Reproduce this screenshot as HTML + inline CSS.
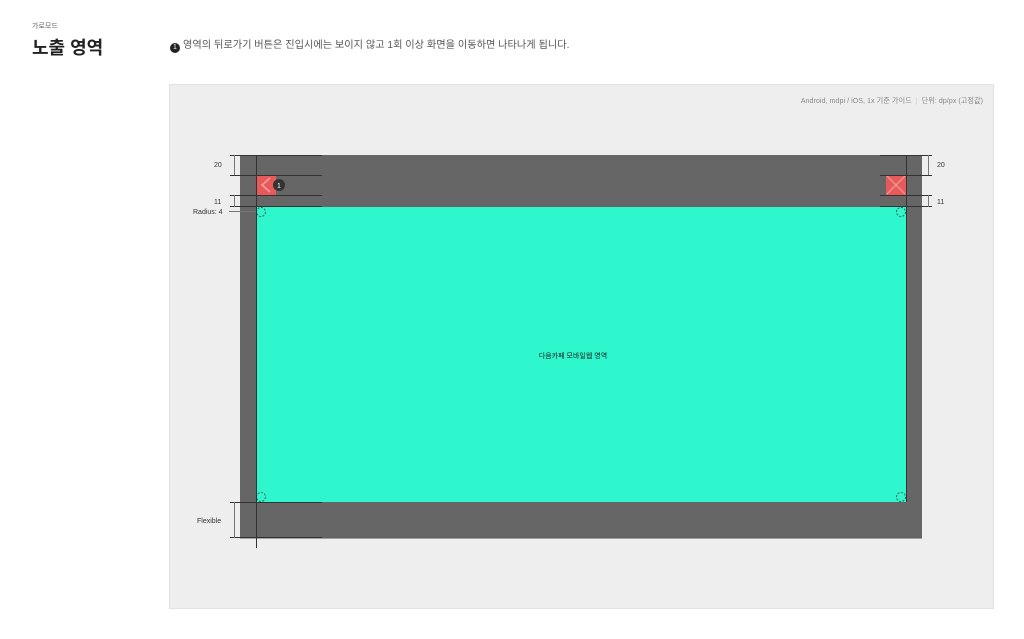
<!DOCTYPE html>
<html><head><meta charset="utf-8"><style>
html,body{margin:0;padding:0;background:#fff;width:1024px;height:639px;overflow:hidden;position:relative;font-family:"Liberation Sans","Noto Sans CJK KR",sans-serif;}
.a{position:absolute}
</style></head><body>
<div class="a" style="left:32px;top:21px;font-size:7px;color:#666">가로모드</div>
<div class="a" style="left:32px;top:34px;font-size:18px;font-weight:bold;color:#222;letter-spacing:0">노출 영역</div>
<div class="a" style="left:170px;top:36px;font-size:10.2px;color:#555;white-space:nowrap"><span style="display:inline-block;width:10px;height:10px;border-radius:50%;background:#222;color:#fff;font-size:7px;text-align:center;line-height:10px;vertical-align:-1px;margin-right:3px">1</span>영역의 뒤로가기 버튼은 진입시에는 보이지 않고 1회 이상 화면을 이동하면 나타나게 됩니다.</div>
<div class="a" style="left:169px;top:84px;width:823px;height:523px;background:#eeeeee;border:1px solid #e2e2e2"></div>
<div class="a" style="left:700px;top:96px;width:283px;text-align:right;font-size:7.2px;color:#888;white-space:nowrap">Android, mdpi / iOS, 1x 기준 가이드 &nbsp;<span style="color:#ccc">|</span>&nbsp; 단위: dp/px (고정값)</div>
<svg class="a" style="left:0;top:0" width="1024" height="639">
<rect x="240" y="155" width="682" height="383" fill="#666" />
<rect x="240" y="537" width="682" height="2" fill="#555" opacity=".5"/>
<rect x="256" y="207" width="650" height="295" fill="#2ef7cd"/>
<rect x="257" y="175" width="19" height="20" fill="#e85a5a"/>
<polyline points="270,178 262,185 270,192" fill="none" stroke="#f5a0a0" stroke-width="1.5"/>
<circle cx="279" cy="185" r="6" fill="#333"/>
<text x="279" y="188" font-size="7" fill="#fff" text-anchor="middle" font-family="Liberation Sans">1</text>
<rect x="886" y="175" width="20" height="20" fill="#e85a5a"/>
<path d="M887 176L905 194M905 176L887 194" stroke="#f5a0a0" stroke-width="1.2"/>
<g stroke="#333" stroke-width="1">
<line x1="230" y1="155.5" x2="322" y2="155.5"/>
<line x1="230" y1="175.5" x2="322" y2="175.5"/>
<line x1="230" y1="195.5" x2="322" y2="195.5"/>
<line x1="230" y1="206.5" x2="322" y2="206.5"/>
<line x1="230" y1="502.5" x2="322" y2="502.5"/>
<line x1="230" y1="537.5" x2="322" y2="537.5"/>
<line x1="256.5" y1="155" x2="256.5" y2="548"/>
<line x1="880" y1="155.5" x2="932" y2="155.5"/>
<line x1="880" y1="175.5" x2="932" y2="175.5"/>
<line x1="880" y1="195.5" x2="932" y2="195.5"/>
<line x1="880" y1="206.5" x2="932" y2="206.5"/>
<line x1="906.5" y1="155" x2="906.5" y2="502"/>
</g>
<g stroke="#777" stroke-width="1">
<line x1="234.5" y1="155" x2="234.5" y2="175"/>
<line x1="234.5" y1="195" x2="234.5" y2="207"/>
<line x1="234.5" y1="502" x2="234.5" y2="538"/>
<line x1="928.5" y1="155" x2="928.5" y2="175"/>
<line x1="928.5" y1="195" x2="928.5" y2="207"/>
<line x1="229" y1="211.5" x2="256" y2="211.5"/>
</g>
<g fill="none" stroke="#333" stroke-width="0.8" stroke-dasharray="2,1.5">
<circle cx="261" cy="212" r="4.5"/>
<circle cx="901" cy="212" r="4.5"/>
<circle cx="261" cy="497" r="4.5"/>
<circle cx="901" cy="497" r="4.5"/>
</g>
<g font-family="Liberation Sans" font-size="7" fill="#333">
<text x="214" y="167">20</text>
<text x="214" y="204">11</text>
<text x="193" y="214">Radius: 4</text>
<text x="197" y="523">Flexible</text>
<text x="937" y="167">20</text>
<text x="937" y="204">11</text>
</g>
<text x="573" y="358" font-size="7" fill="#222" text-anchor="middle" font-family="Liberation Sans, Noto Sans CJK KR, sans-serif">다음카페 모바일웹 영역</text>
</svg>
</body></html>
